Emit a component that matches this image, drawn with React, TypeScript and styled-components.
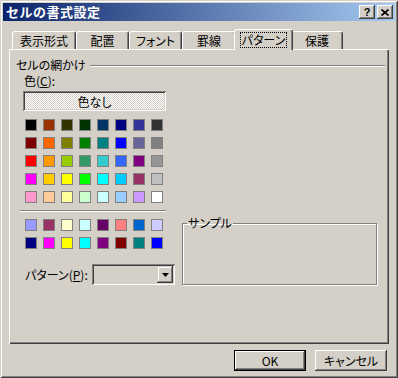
import React from 'react'
import styled, {createGlobalStyle} from 'styled-components'

const FACE = '#D4D0C8'
const FONT = '"Noto Sans CJK JP", "Liberation Sans", sans-serif'

const GlobalStyle = createGlobalStyle`
  html, body {
    margin: 0;
    padding: 0;
    background: ${FACE};
  }
  * {
    box-sizing: border-box;
  }
`

const palette = [
  ['#000000', '#993300', '#333300', '#003300', '#003366', '#000080', '#333399', '#333333'],
  ['#800000', '#FF6600', '#808000', '#008000', '#008080', '#0000FF', '#666699', '#808080'],
  ['#FF0000', '#FF9900', '#99CC00', '#339966', '#33CCCC', '#3366FF', '#800080', '#969696'],
  ['#FF00FF', '#FFCC00', '#FFFF00', '#00FF00', '#00FFFF', '#00CCFF', '#993366', '#C0C0C0'],
  ['#FF99CC', '#FFCC99', '#FFFF99', '#CCFFCC', '#CCFFFF', '#99CCFF', '#CC99FF', '#FFFFFF'],
]

const chartPalette = [
  ['#9999FF', '#993366', '#FFFFCC', '#CCFFFF', '#660066', '#FF8080', '#0066CC', '#CCCCFF'],
  ['#000080', '#FF00FF', '#FFFF00', '#00FFFF', '#800080', '#800000', '#008080', '#0000FF'],
]

const tabs = [
  {label: '表示形式', width: 64},
  {label: '配置', width: 53},
  {label: 'フォント', width: 53},
  {label: '罫線', width: 54},
  {label: 'パターン', width: 55},
  {label: '保護', width: 52},
]
const activeTab = 4

const App: React.FC = () => {
  return (
    <>
      <GlobalStyle />
      <Window>
        <TitleBar>
          <Title>セルの書式設定</Title>
          <CaptionButtons>
            <CaptionButton>
              <span className="help">?</span>
            </CaptionButton>
            <CaptionButton>
              <svg width="8" height="7" viewBox="0 0 8 7">
                <path d="M0.5 0.5 L7.5 6.5 M7.5 0.5 L0.5 6.5" stroke="#000" strokeWidth="1.6" />
              </svg>
            </CaptionButton>
          </CaptionButtons>
        </TitleBar>

        <TabRow>
          {tabs.map((t, i) => (
            <Tab key={t.label} $w={t.width} $active={i == activeTab}>
              <span className="tab_Label">{t.label}</span>
            </Tab>
          ))}
        </TabRow>

        <Panel>
          <SectionHeader>
            <span>セルの網かけ</span>
            <EtchedLine />
          </SectionHeader>

          <PanelBody>
            <LeftCol>
              <FieldLabel>
                色(<u>C</u>):
              </FieldLabel>
              <NoColorButton>色なし</NoColorButton>

              <SwatchGrid $top={8}>
                {palette.flat().map((c, i) => (
                  <Swatch key={i} style={{background: c}} />
                ))}
              </SwatchGrid>

              <Separator />

              <SwatchGrid $top={7}>
                {chartPalette.flat().map((c, i) => (
                  <Swatch key={i} style={{background: c}} />
                ))}
              </SwatchGrid>

              <PatternRow>
                <PatternLabel>
                  パターン(<u>P</u>):
                </PatternLabel>
                <Combo>
                  <ComboArrow>
                    <svg width="7" height="4" viewBox="0 0 7 4">
                      <path d="M0 0 H7 L3.5 4 Z" fill="#000" />
                    </svg>
                  </ComboArrow>
                </Combo>
              </PatternRow>
            </LeftCol>

            <SampleGroup>
              <legend>サンプル</legend>
            </SampleGroup>
          </PanelBody>
        </Panel>

        <ButtonRow>
          <PushButton $default>OK</PushButton>
          <PushButton>キャンセル</PushButton>
        </ButtonRow>
      </Window>
    </>
  )
}

const Window = styled.div`
  width: 398px;
  height: 378px;
  padding: 3px;
  background: ${FACE};
  font-family: ${FONT};
  font-size: 12px;
  font-feature-settings: "palt";
  white-space: nowrap;
  color: #000;
  box-shadow:
    inset 1px 1px 0 ${FACE},
    inset -1px -1px 0 #404040,
    inset 2px 2px 0 #ffffff,
    inset -2px -2px 0 #808080;
  display: flex;
  flex-direction: column;
`

const TitleBar = styled.div`
  height: 18px;
  display: flex;
  align-items: center;
  justify-content: space-between;
  padding: 0 2px 0 3px;
  background: linear-gradient(to right, #0a246a, #a6caf0);
`

const Title = styled.span`
  color: #fff;
  font-weight: bold;
  font-size: 13px;
  line-height: 18px;
  letter-spacing: 0.5px;
  font-feature-settings: normal;
`

const CaptionButtons = styled.div`
  display: flex;
  gap: 2px;
`

const CaptionButton = styled.div`
  width: 16px;
  height: 14px;
  background: ${FACE};
  display: flex;
  align-items: center;
  justify-content: center;
  box-shadow:
    inset -1px -1px 0 #404040,
    inset 1px 1px 0 #ffffff,
    inset -2px -2px 0 #808080;
  .help {
    font-family: "Liberation Sans", sans-serif;
    font-weight: bold;
    font-size: 11px;
    line-height: 11px;
    margin-top: 1px;
  }
`

const TabRow = styled.div`
  display: flex;
  align-items: flex-end;
  height: 20px;
  margin-top: 8px;
  padding-left: 9px;
`

interface ITabProps {
  $w: number
  $active: boolean
}

const Tab = styled.div<ITabProps>`
  position: relative;
  z-index: ${props => props.$active ? 2 : 1};
  width: ${props => props.$active ? props.$w + 4 : props.$w}px;
  height: ${props => props.$active ? 21 : 18}px;
  margin: 0 ${props => props.$active ? -2 : 0}px ${props => props.$active ? -1 : 0}px;
  background: ${FACE};
  border-top: 1px solid #fff;
  border-left: 1px solid #fff;
  border-right: 1px solid #404040;
  border-radius: 3px 3px 0 0;
  box-shadow: inset -1px 0 0 #808080;
  display: flex;
  align-items: ${props => props.$active ? 'flex-start' : 'center'};
  justify-content: center;
  padding-top: ${props => props.$active ? 2 : 0}px;
  .tab_Label {
    font-size: 12px;
    line-height: 14px;
    padding: 0 1px;
    border: 1px ${props => props.$active ? 'dotted #000' : 'solid transparent'};
  }
`

const Panel = styled.div`
  width: 380px;
  height: 295px;
  margin-left: 6px;
  padding: 9px 4px 0 7px;
  background: ${FACE};
  box-shadow:
    inset 1px 1px 0 #ffffff,
    inset -1px -1px 0 #404040,
    inset -2px -2px 0 #808080;
`

const SectionHeader = styled.div`
  display: flex;
  align-items: center;
  gap: 4px;
  height: 14px;
  line-height: 14px;
`

const EtchedLine = styled.div`
  flex: 1;
  height: 2px;
  margin-top: 2px;
  border-top: 1px solid #808080;
  border-bottom: 1px solid #fff;
`

const PanelBody = styled.div`
  display: flex;
  margin-left: 4px;
  margin-top: 2px;
`

const LeftCol = styled.div`
  width: 155px;
  display: flex;
  flex-direction: column;
`

const FieldLabel = styled.div`
  margin-left: 4px;
  line-height: 14px;
  u {
    text-decoration: underline;
  }
`

const NoColorButton = styled.div`
  margin: 3px 0 0 3px;
  width: 143px;
  height: 20px;
  display: flex;
  align-items: center;
  justify-content: center;
  background-color: #fff;
  background-image: repeating-conic-gradient(#ffffff 0 25%, ${FACE} 0 50%);
  background-size: 2px 2px;
  box-shadow:
    inset 1px 1px 0 #808080,
    inset -1px -1px 0 #ffffff,
    inset 2px 2px 0 #404040,
    inset -2px -2px 0 ${FACE};
  padding-top: 1px;
`

interface IGridProps {
  $top: number
}

const SwatchGrid = styled.div<IGridProps>`
  display: grid;
  grid-template-columns: repeat(8, 12px);
  grid-auto-rows: 12px;
  gap: 6px;
  margin: ${props => props.$top}px 0 0 5px;
`

const Swatch = styled.div`
  width: 12px;
  height: 12px;
  border: 1px solid #808080;
`

const Separator = styled.div`
  width: 146px;
  height: 2px;
  margin-top: 7px;
  border-top: 1px solid #808080;
  border-bottom: 1px solid #fff;
`

const PatternRow = styled.div`
  display: flex;
  align-items: center;
  margin-top: 15px;
  padding-left: 5px;
`

const PatternLabel = styled.div`
  width: 67px;
  line-height: 14px;
  padding-top: 1px;
`

const Combo = styled.div`
  width: 83px;
  height: 21px;
  padding: 2px;
  display: flex;
  justify-content: flex-end;
  background: ${FACE};
  box-shadow:
    inset 1px 1px 0 #808080,
    inset -1px -1px 0 #ffffff,
    inset 2px 2px 0 #404040,
    inset -2px -2px 0 ${FACE};
`

const ComboArrow = styled.div`
  width: 16px;
  height: 17px;
  display: flex;
  align-items: center;
  justify-content: center;
  background: ${FACE};
  box-shadow:
    inset -1px -1px 0 #404040,
    inset 1px 1px 0 ${FACE},
    inset -2px -2px 0 #808080,
    inset 2px 2px 0 #ffffff;
`

const SampleGroup = styled.fieldset`
  width: 195px;
  height: 69px;
  margin: 142px 0 0 7px;
  padding: 0;
  border: 1px solid #808080;
  box-shadow:
    inset 1px 1px 0 #ffffff,
    1px 1px 0 #ffffff;
  legend {
    margin-left: 4px;
    padding: 0 1px;
    font-size: 12px;
    line-height: 14px;
  }
`

const ButtonRow = styled.div`
  display: flex;
  justify-content: flex-end;
  gap: 9px;
  margin-top: 6px;
  padding-right: 8px;
`

interface IButtonProps {
  $default?: boolean
}

const PushButton = styled.div<IButtonProps>`
  width: 72px;
  height: 21px;
  display: flex;
  align-items: center;
  justify-content: center;
  background: ${FACE};
  border: ${props => props.$default ? '1px solid #000' : 'none'};
  box-shadow: ${props => props.$default
    ? `inset -1px -1px 0 #404040, inset 1px 1px 0 #ffffff, inset -2px -2px 0 #808080`
    : `inset -1px -1px 0 #404040, inset 1px 1px 0 #ffffff, inset -2px -2px 0 #808080, inset 2px 2px 0 ${FACE}`};
  font-size: 12px;
  line-height: 14px;
`

export default App
